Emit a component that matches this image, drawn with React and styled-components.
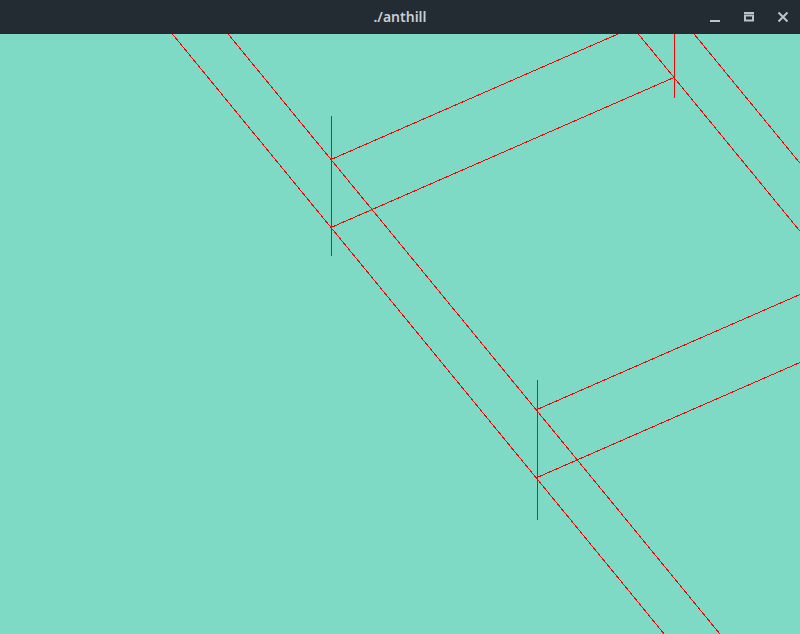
import React from 'react'
import styled, { createGlobalStyle } from 'styled-components'

const GlobalStyle = createGlobalStyle`
  html, body, #root {
    margin: 0;
    padding: 0;
    width: 100%;
    height: 100%;
  }
  body {
    overflow: hidden;
    font-family: "Noto Sans", "DejaVu Sans", sans-serif;
  }
`

const Window = styled.div`
  display: flex;
  flex-direction: column;
  width: 800px;
  height: 634px;
  background-color: #7fdac5;
`

const TitleBar = styled.div`
  position: relative;
  flex: 0 0 34px;
  display: flex;
  align-items: center;
  justify-content: center;
  background-color: #232b33;
  z-index: 1;
`

const Title = styled.span`
  color: #c9ced3;
  font-size: 14px;
  font-weight: 600;
  margin-top: -1px;
`

const Controls = styled.div`
  position: absolute;
  top: 0;
  right: 0;
  height: 34px;
  display: flex;
  align-items: center;
`

const ControlButton = styled.button`
  width: 34px;
  height: 34px;
  padding: 0;
  border: none;
  background: transparent;
  display: flex;
  align-items: center;
  justify-content: center;
  color: #bcc3c9;
`

const Canvas = styled.svg`
  flex: 1;
  display: block;
  width: 800px;
  height: 600px;
`

// slope of the long diagonals and of the cross beams
const DIAG = 1.22
const BEAM = 0.4373

const diagonal = (x, y) => ({
  x1: x + (-200 - y) / DIAG,
  y1: -200,
  x2: x + (800 - y) / DIAG,
  y2: 800
})

const diagonals = [
  diagonal(331, 227.5),
  diagonal(331, 159.5),
  diagonal(674, 77.5),
  diagonal(674, 9.5)
]

const beams = [
  { x1: 331, y1: 159.5, x2: 674, y2: 159.5 - 343 * BEAM },
  { x1: 331, y1: 227.5, x2: 674, y2: 227.5 - 343 * BEAM },
  { x1: 537, y1: 409.5, x2: 900, y2: 409.5 - 363 * BEAM },
  { x1: 537, y1: 477.5, x2: 900, y2: 477.5 - 363 * BEAM }
]

const posts = [
  { x: 331.5, top: 116, bottom: 256 },
  { x: 537.5, top: 380, bottom: 520 },
  { x: 674.5, top: -43, bottom: 98 }
]

function Minimize() {
  return (
    <svg width="12" height="12" viewBox="0 0 12 12">
      <rect x="1" y="9" width="10" height="2" fill="currentColor" />
    </svg>
  )
}

function Maximize() {
  return (
    <svg width="12" height="12" viewBox="0 0 12 12">
      <rect x="1" y="1" width="10" height="2" fill="currentColor" />
      <rect x="2" y="4.5" width="8" height="5" fill="none" stroke="currentColor" strokeWidth="2" />
    </svg>
  )
}

function Close() {
  return (
    <svg width="12" height="12" viewBox="0 0 12 12">
      <path d="M1.5 1.5 L10.5 10.5 M10.5 1.5 L1.5 10.5" stroke="currentColor" strokeWidth="2" />
    </svg>
  )
}

export default function App() {
  return (
    <>
      <GlobalStyle />
      <Window>
        <TitleBar>
          <Title>./anthill</Title>
          <Controls>
            <ControlButton><Minimize /></ControlButton>
            <ControlButton><Maximize /></ControlButton>
            <ControlButton><Close /></ControlButton>
          </Controls>
        </TitleBar>
        <Canvas viewBox="0 34 800 600" shapeRendering="crispEdges">
          {diagonals.map((l, i) => (
            <line key={'d' + i} {...l} stroke="#ff0000" strokeWidth="1" />
          ))}
          {beams.map((l, i) => (
            <line key={'b' + i} {...l} stroke="#ff0000" strokeWidth="1" />
          ))}
          {posts.map((p, i) => (
            <line key={'p' + i} x1={p.x} y1={p.top} x2={p.x} y2={p.bottom} stroke="#ff0000" strokeWidth="1" />
          ))}
        </Canvas>
      </Window>
    </>
  )
}
